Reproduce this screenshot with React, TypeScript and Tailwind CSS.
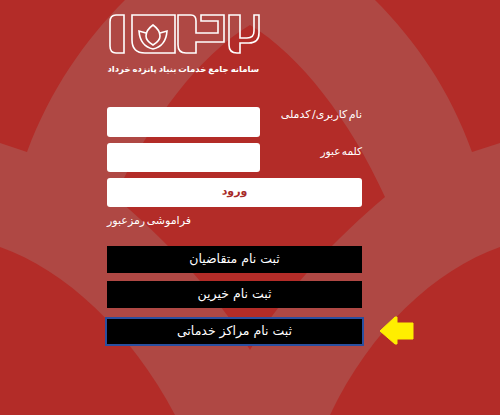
const labelFont = "font-['DejaVu_Sans',sans-serif]";

function Background() {
  return (
    <svg className="absolute inset-0" width="500" height="415" viewBox="0 0 500 415" aria-hidden="true">
      <rect width="500" height="415" fill="#af4844" />
      <g fill="#b32c28">
        <path d="M0 0H125C85 40 50 90 27 152L0 143Z" />
        <path d="M500 0H375C415 40 450 90 472 152L500 143Z" />
        <path d="M250 25C300 55 350 120 385 197C340 235 285 290 250 350C215 290 160 235 115 197C150 120 200 55 250 25Z" />
        <path d="M0 247C65 270 130 330 175 415H0Z" />
        <path d="M500 247C435 270 370 330 330 415H500Z" />
      </g>
    </svg>
  );
}

function Logo() {
  return (
    <svg className="ml-[1px]" width="153" height="44" viewBox="108 12 153 44" fill="none" stroke="#fff" strokeWidth="1.6" aria-label="logo">
      <path d="M124 15H116Q110 15 110 22V46Q110 53 116 53H124Z" />
      <path d="M132 15H175V53H145Q132 53 132 40Z" />
      <path d="M178 15H191Q196 15 196 21V33H218V21H201V15H224V42H196V53H186Q178 53 178 45Z" />
      <path d="M229 15H240V38H247Q254 38 254 31V15H259V33Q259 43 249 43H240V53H237Q229 53 229 45Z" />
      <path d="M153 25Q146 30 146 36Q146 41 153 45Q160 41 160 36Q160 30 153 25Z" />
      <path d="M146 33L139 31Q140 46 153 49Q166 46 167 31L160 33" />
    </svg>
  );
}

function BlackButton({ label, outlined }: { label: string; outlined?: boolean }) {
  return (
    <button
      type="button"
      className={`flex items-center justify-center bg-black text-[12.5px] text-white ${labelFont} ${
        outlined ? "h-[29px] w-[259px] border-2 border-[#2a4f9f]" : "h-[27px] w-[255px]"
      }`}
    >
      {label}
    </button>
  );
}

export default function App() {
  return (
    <div dir="ltr" className={`relative h-[415px] w-[500px] overflow-hidden ${labelFont}`}>
      <Background />
      <div className="relative flex w-[362px] flex-col pl-[107px] pt-[12px]">
        <Logo />
        <p dir="rtl" className="mt-[6px] w-[152px] text-[8.5px] font-bold leading-[14px] text-white [word-spacing:-1px]">
          سامانه جامع خدمات بنیاد پانزده خرداد
        </p>
        <div className="mt-[31px] flex justify-between">
          <div className="h-[30px] w-[153px] rounded-[3px] bg-white" />
          <span dir="rtl" className="text-[11px] leading-[16px] text-white [word-spacing:-2px]">نام کاربری/ کدملی</span>
        </div>
        <div className="mt-[6px] flex justify-between">
          <div className="h-[29px] w-[153px] rounded-[3px] bg-white" />
          <span dir="rtl" className="text-[10.5px] leading-[16px] text-white [word-spacing:-2px]">کلمه عبور</span>
        </div>
        <button type="button" className="mt-[6px] flex h-[29px] items-center justify-center rounded-[3px] bg-white text-[11px] font-bold text-[#a72a28]">
          ورود
        </button>
        <p dir="rtl" className="mt-[6px] self-start text-[11px] leading-[16px] text-white [word-spacing:-2px]">فراموشی رمزعبور</p>
        <div className="mt-[17px] flex flex-col gap-[8px]">
          <BlackButton label="ثبت نام متقاضیان" />
          <BlackButton label="ثبت نام خیرین" />
          <div className="-ml-[2px] flex w-[320px] items-center">
            <BlackButton label="ثبت نام مراکز خدماتی" outlined />
            <svg className="ml-[15px] shrink-0" width="36" height="30" viewBox="0 0 36 30" aria-hidden="true">
              <path d="M1 15L16 1H18V7H34V23H18V28H16Z" fill="#ffee00" stroke="#ffee00" strokeLinejoin="round" />
            </svg>
          </div>
        </div>
      </div>
    </div>
  );
}
